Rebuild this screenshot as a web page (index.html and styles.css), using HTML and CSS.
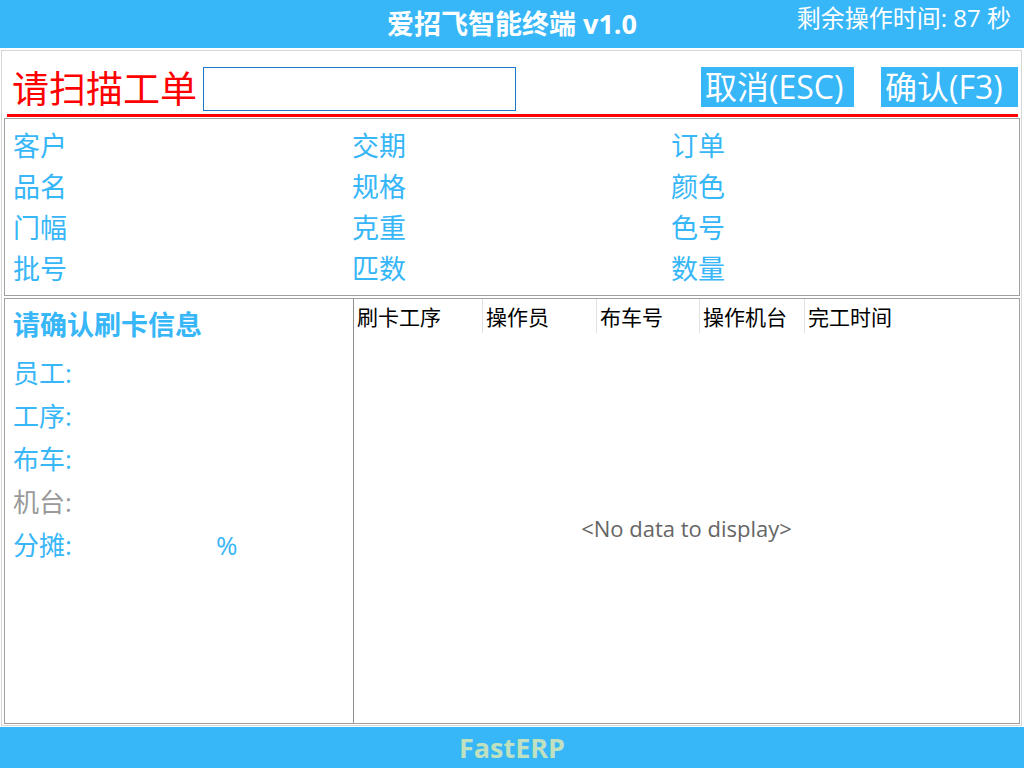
FILE: index.html
```html
<!DOCTYPE html>
<html lang="zh-CN">
<head>
<meta charset="utf-8">
<title>爱招飞智能终端 v1.0</title>
<link rel="stylesheet" href="styles.css">
</head>
<body>
<div class="app">
  <header class="topbar">
    <div class="topbar-side"></div>
    <div class="title">爱招飞智能终端 v1.0</div>
    <div class="timer">剩余操作时间: 87 秒</div>
  </header>
  <main class="panel">
    <div class="scan-row">
      <span class="scan-label">请扫描工单</span>
      <input class="scan-input" type="text">
      <div class="actions">
        <span class="btn btn-cancel">取消(ESC)</span>
        <span class="btn btn-ok">确认(F3)</span>
      </div>
    </div>
    <div class="red-line"></div>
    <section class="info-box">
      <div class="info-item">客户</div><div class="info-item">交期</div><div class="info-item">订单</div>
      <div class="info-item">品名</div><div class="info-item">规格</div><div class="info-item">颜色</div>
      <div class="info-item">门幅</div><div class="info-item">克重</div><div class="info-item">色号</div>
      <div class="info-item">批号</div><div class="info-item">匹数</div><div class="info-item">数量</div>
    </section>
    <section class="card-box">
      <div class="card-info">
        <div class="card-title">请确认刷卡信息</div>
        <div class="card-row">员工:</div>
        <div class="card-row">工序:</div>
        <div class="card-row">布车:</div>
        <div class="card-row muted">机台:</div>
        <div class="card-row"><span class="share-label">分摊:</span>%</div>
      </div>
      <div class="grid">
        <div class="grid-head">
          <div class="gh c1">刷卡工序</div>
          <div class="gh c2">操作员</div>
          <div class="gh c3">布车号</div>
          <div class="gh c4">操作机台</div>
          <div class="gh c5">完工时间</div>
        </div>
        <div class="grid-empty">&lt;No data to display&gt;</div>
      </div>
    </section>
  </main>
  <footer class="footer">FastERP</footer>
</div>
</body>
</html>
```
FILE: styles.css
```css
* { box-sizing: border-box; }
html, body { margin: 0; padding: 0; }
body {
  width: 1024px;
  height: 768px;
  overflow: hidden;
  background: #ffffff;
  font-family: "Open Sans", "Noto Sans CJK SC", sans-serif;
}
.app {
  width: 1024px;
  height: 768px;
  display: flex;
  flex-direction: column;
}
.topbar {
  height: 48px;
  flex: none;
  background: #37b6f8;
  color: #ffffff;
  display: grid;
  grid-template-columns: 1fr auto 1fr;
  align-items: center;
}
.title {
  font-size: 27px;
  font-weight: bold;
  line-height: 46px;
}
.timer {
  justify-self: end;
  align-self: start;
  font-size: 24px;
  line-height: 36px;
  padding-right: 13px;
  white-space: nowrap;
}
.panel {
  flex: 1;
  margin: 2px 2px 1px 1px;
  border: 1px solid #d6d6d6;
  display: flex;
  flex-direction: column;
  min-height: 0;
}
.scan-row {
  height: 63px;
  flex: none;
  display: flex;
  align-items: flex-start;
  padding: 16px 3px 0 10px;
}
.scan-label {
  font-size: 37px;
  line-height: 44px;
  color: #ff0000;
  white-space: nowrap;
}
.scan-input {
  width: 313px;
  height: 44px;
  margin: 0 0 0 6px;
  border: 1px solid #1f78c8;
  padding: 0 4px;
  outline: none;
  font-size: 20px;
}
.actions {
  margin-left: auto;
  display: flex;
  gap: 27px;
}
.btn {
  display: block;
  height: 40px;
  background: #37b6f8;
  color: #ffffff;
  font-size: 32px;
  line-height: 40px;
  white-space: nowrap;
  padding-left: 4px;
}
.btn-cancel { width: 153px; }
.btn-ok { width: 137px; }
.red-line {
  height: 3px;
  flex: none;
  margin: 0 3px 0 5px;
  background: #ff0000;
}
.info-box {
  flex: none;
  height: 178px;
  margin: 1px 1px 0 2px;
  border: 1px solid #a0a0a0;
  padding: 6px 0 0 8px;
  display: grid;
  grid-template-columns: 339px 319px 1fr;
  grid-auto-rows: 41px;
  align-items: center;
}
.info-item {
  font-size: 27px;
  line-height: 41px;
  color: #37b6f8;
}
.card-box {
  flex: 1;
  min-height: 0;
  margin: 2px 1px 1px 2px;
  border: 1px solid #a0a0a0;
  display: flex;
}
.card-info {
  width: 349px;
  flex: none;
  border-right: 1px solid #909090;
  padding: 8px 0 0 8px;
  color: #37b6f8;
}
.card-title {
  font-size: 27px;
  font-weight: bold;
  line-height: 36px;
  margin-bottom: 9px;
}
.card-row {
  font-size: 26px;
  line-height: 43px;
  white-space: nowrap;
}
.card-row.muted { color: #9a9a9a; }
.share-label {
  display: inline-block;
  width: 203px;
}
.grid {
  flex: 1;
  display: flex;
  flex-direction: column;
  min-width: 0;
}
.grid-head {
  height: 34px;
  flex: none;
  display: flex;
}
.gh {
  font-size: 21px;
  line-height: 36px;
  color: #000000;
  padding-left: 3px;
  border-right: 1px solid #e2e2e2;
  white-space: nowrap;
}
.c1 { width: 129px; }
.c2 { width: 114px; }
.c3 { width: 103px; }
.c4 { width: 105px; }
.c5 { flex: 1; border-right: none; }
.grid-empty {
  flex: 1;
  display: flex;
  align-items: center;
  justify-content: center;
  color: #666666;
  font-size: 22px;
}
.footer {
  height: 41px;
  flex: none;
  background: #37b6f8;
  color: #bfe1c0;
  font-size: 27px;
  font-weight: bold;
  text-align: center;
  line-height: 41px;
}
```
